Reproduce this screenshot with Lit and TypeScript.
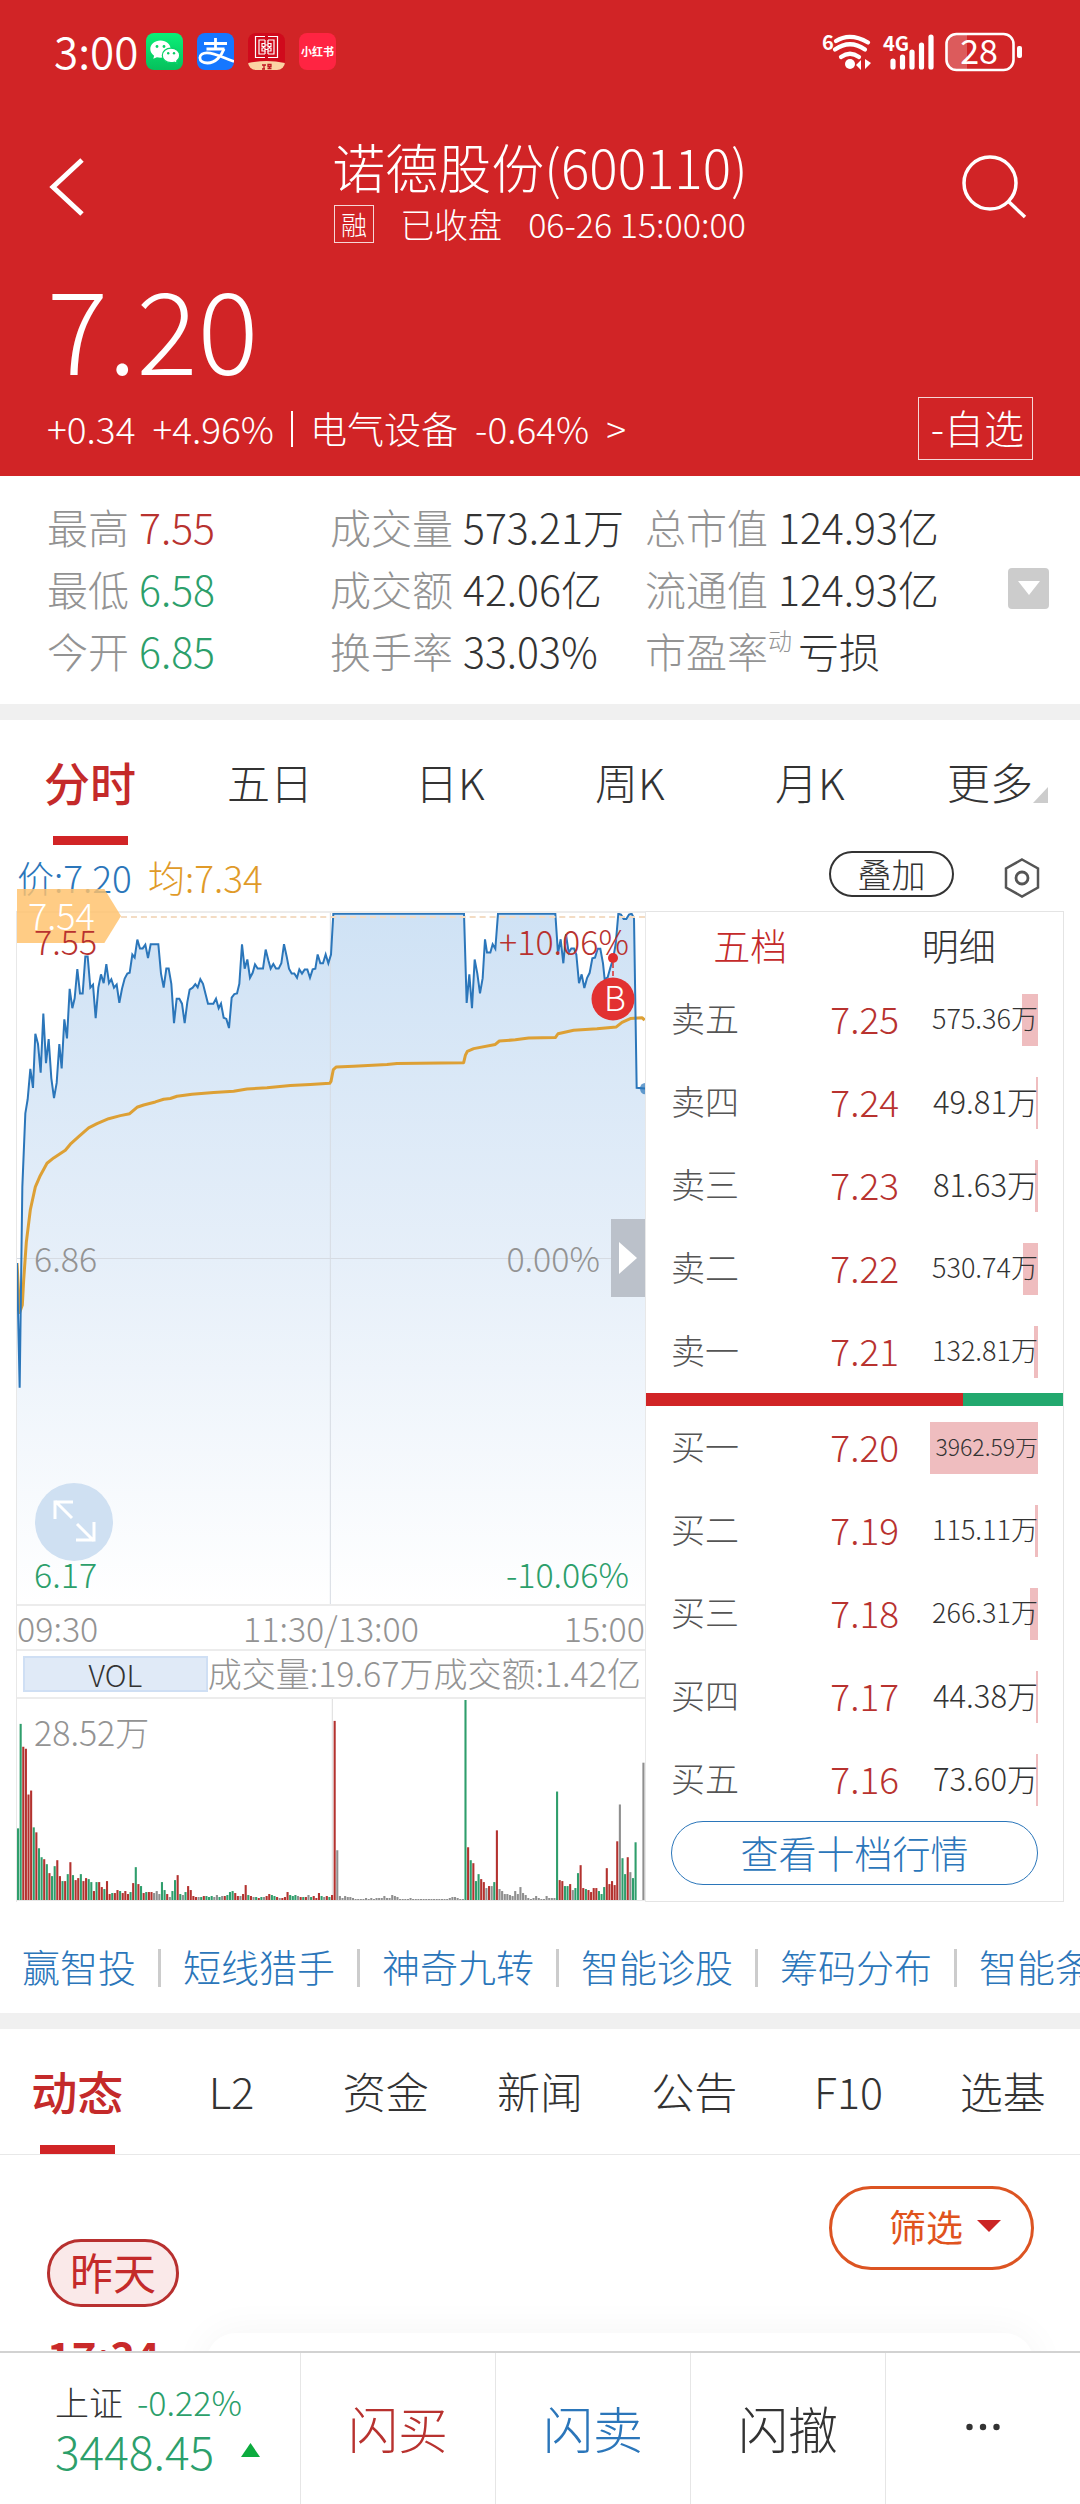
import { LitElement, html, css, svg } from "lit";
import { customElement, property } from "lit/decorators.js";
import { classMap } from "lit/directives/class-map.js";
import { styleMap } from "lit/directives/style-map.js";

const FONT = css`"Noto Sans CJK SC", "Noto Sans", sans-serif`;

const RESET = css`
  * {
    box-sizing: border-box;
  }
  button {
    margin: 0;
    padding: 0;
    border: 0;
    background: none;
    font: inherit;
    color: inherit;
    cursor: pointer;
  }
  a {
    color: inherit;
    text-decoration: none;
  }
  svg {
    display: block;
  }
`;

/* ---------- data ---------- */

interface Stat {
  label: string;
  value: string;
  tone?: "up" | "down";
  mark?: string;
}

const STATS: Stat[][] = [
  [
    { label: "最高", value: "7.55", tone: "up" },
    { label: "成交量", value: "573.21万" },
    { label: "总市值", value: "124.93亿" },
  ],
  [
    { label: "最低", value: "6.58", tone: "down" },
    { label: "成交额", value: "42.06亿" },
    { label: "流通值", value: "124.93亿" },
  ],
  [
    { label: "今开", value: "6.85", tone: "down" },
    { label: "换手率", value: "33.03%" },
    { label: "市盈率", value: "亏损", mark: "动" },
  ],
];

interface Level {
  name: string;
  price: string;
  amount: string;
  share: number;
}

const ASKS: Level[] = [
  { name: "卖五", price: "7.25", amount: "575.36万", share: 15 },
  { name: "卖四", price: "7.24", amount: "49.81万", share: 2 },
  { name: "卖三", price: "7.23", amount: "81.63万", share: 3 },
  { name: "卖二", price: "7.22", amount: "530.74万", share: 14 },
  { name: "卖一", price: "7.21", amount: "132.81万", share: 4 },
];

const BIDS: Level[] = [
  { name: "买一", price: "7.20", amount: "3962.59万", share: 100 },
  { name: "买二", price: "7.19", amount: "115.11万", share: 3 },
  { name: "买三", price: "7.18", amount: "266.31万", share: 7 },
  { name: "买四", price: "7.17", amount: "44.38万", share: 2 },
  { name: "买五", price: "7.16", amount: "73.60万", share: 2 },
];

const PRICE_LINE =
  "50,1105 58,1432 66,905 75,712 82,675 90,595 98,645 105,503 113,530 121,605 129,450 137,580 145,517 153,620 161,672 169,632 177,530 184,594 192,465 200,515 208,385 216,436 223,410 231,333 239,397 247,397 255,300 262,300 270,382 278,374 286,462 294,382 302,347 310,370 318,320 326,370 333,360 341,382 349,374 357,422 365,385 373,358 381,345 388,343 396,295 403,303 411,256 419,279 427,279 435,269 443,304 451,268 474,268 482,345 490,382 498,332 505,332 513,372 521,475 529,411 537,411 545,424 553,475 561,420 568,387 577,382 585,373 592,381 600,360 608,372 616,400 623,424 639,424 647,411 655,436 662,424 670,461 678,464 686,488 694,408 702,399 710,397 717,372 725,268 733,332 741,308 749,356 757,343 764,321 772,332 788,332 796,282 804,310 811,332 819,320 827,332 835,332 843,318 851,268 859,300 866,332 874,345 882,345 890,356 897,334 905,345 913,334 921,334 929,356 937,334 945,332 952,295 960,318 968,318 976,295 984,318 992,295 999,188 1391,188 1399,422 1407,347 1415,436 1423,308 1431,345 1439,397 1447,357 1454,255 1460,290 1470,290 1477,268 1485,280 1493,188 1665,188 1673,292 1681,255 1689,318 1697,242 1705,290 1713,279 1721,279 1728,295 1736,370 1744,347 1752,383 1760,357 1768,343 1776,305 1784,303 1792,280 1800,280 1808,318 1813,360 1822,355 1830,330 1838,307 1846,268 1854,188 1862,190 1870,202 1878,202 1886,190 1894,188 1901,200 1909,645 1934,647";

const AVERAGE_LINE =
  "50,1105 58,1235 66,1215 70,1150 78,1050 90,965 105,905 120,875 140,843 160,829 195,809 210,793 235,773 265,750 290,739 325,726 360,718 388,713 410,696 430,690 465,682 490,675 510,673 530,667 575,662 640,657 700,654 740,648 800,645 870,639 930,636 988,633 992,628 999,597 1008,590 1060,588 1160,584 1190,581 1390,579 1395,560 1401,549 1420,542 1485,531 1497,522 1545,519 1585,514 1665,513 1673,503 1720,494 1790,490 1848,485 1865,473 1890,463 1925,461 1933,467";

/* One entry a minute: r = up, g = down, n = flat, then the bar height. */
const VOLUME =
  "g72 g177 r154 r152 r106 r110 g73 r68 g52 g43 r41 g36 r27 g24 g34 r40 r24 g19 r19 g26 r38 g25 r20 r22 g26 r19 r22 g21 g18 r9 g18 r18 r13 g11 r19 r6 g7 r7 r10 g9 r7 r9 r6 g8 r17 g33 r16 g14 r7 g8 r8 r8 n7 n9 n6 g18 g10 r6 n3 g9 g20 r25 g6 n5 g8 r14 r10 r4 r3 n3 g3 r4 g4 g3 g4 n3 n5 g3 n4 r4 g5 g8 g9 r7 r4 n4 r6 r15 g5 r4 n3 g3 r2 g3 n3 r4 r6 g5 g4 r3 n2 r2 r3 r8 g5 g4 g5 n4 r3 g3 r3 n5 g3 r4 r2 r7 g4 n3 r4 g3 r5 r180 n50 n4 n2 n4 n3 n3 n2 n1 n1 n1 n1 n2 n1 n2 n1 n2 n2 n2 n4 n2 n2 n5 n4 n3 n1 n1 n1 n1 n2 n1 n1 n1 n1 n1 n1 n1 n1 n1 n1 n1 n1 n1 n1 n2 n3 n3 n2 n1 n1 g201 r53 g40 r37 g19 g26 r21 r18 n12 r14 n14 g18 r70 n11 n9 n6 n6 n5 n4 n9 n6 n13 n7 n5 n2 n1 n2 n4 n2 n1 n1 n4 n2 n2 n2 g109 r20 r19 g14 g14 r16 n10 g12 g27 r35 r12 g11 r10 r8 r12 r12 g9 g6 g13 r32 r16 r19 r15 r59 n96 g42 g26 r43 n28 g22 g58 n0 n0 n138";

const TONES: Record<string, string> = { r: "#b3322f", g: "#2f9e6c", n: "#8f8f8f" };

/* ---------- status bar ---------- */

@customElement("status-bar")
class StatusBar extends LitElement {
  static styles = [
    RESET,
    css`
      :host {
        display: flex;
        align-items: center;
        height: 103px;
        padding: 0 57px 0 54px;
        color: #fff;
      }
      .clock {
        margin-right: 8px;
        padding-bottom: 4px;
        font-size: 44px;
        font-weight: 350;
        line-height: 60px;
      }
      .apps {
        display: flex;
        gap: 14px;
      }
      .signals {
        display: flex;
        align-items: center;
        gap: 9px;
        margin-left: auto;
      }
      .tiny {
        font: 700 11px ${FONT};
      }
      .net {
        font: 700 20px ${FONT};
      }
      .level {
        font: 400 34px ${FONT};
      }
    `,
  ];

  render() {
    return html`
      <span class="clock">3:00</span>
      <span class="apps">
        <svg width="37" height="37" viewBox="0 0 37 37">
          <defs>
            <linearGradient id="wx" x1="0" y1="0" x2="0" y2="1">
              <stop offset="0" stop-color="#0af078" />
              <stop offset="1" stop-color="#06c05c" />
            </linearGradient>
          </defs>
          <rect width="37" height="37" rx="8" fill="url(#wx)" />
          <path d="M14.500 7.500c5.800 0 10.200 3.800 10.200 8.600s-4.400 8.600-10.200 8.600c-1.300 0-2.500-.2-3.600-.5l-3.600 1.600.8-3c-2.400-1.600-3.800-3.900-3.800-6.700 0-4.800 4.400-8.600 10.200-8.600z" fill="#fff" />
          <path d="M25 15.200c5 0 8.700 3.200 8.700 7.200 0 2.300-1.200 4.200-3 5.500l.6 2.500-3-1.200c-1 .3-2.100.5-3.300.5-5 0-8.700-3.300-8.700-7.300s3.700-7.200 8.700-7.200z" fill="#fff" stroke="#08d268" stroke-width="1.200" />
          <circle cx="11" cy="13.500" r="1.400" fill="#08d268" />
          <circle cx="18" cy="13.500" r="1.400" fill="#08d268" />
          <circle cx="22.200" cy="20.300" r="1.200" fill="#08cc64" />
          <circle cx="28" cy="20.300" r="1.200" fill="#08cc64" />
        </svg>
        <svg width="37" height="37" viewBox="0 0 37 37">
          <rect width="37" height="37" rx="8" fill="#1677ff" />
          <g fill="none" stroke="#fff" stroke-linejoin="round">
            <path d="M7 10.500h23M18.500 5v11M9.500 16h18" stroke-width="2.800" />
            <path d="M27 16c-2.600 7-8.500 14-16.500 14-4.500 0-7.600-2-7.600-5.200 0-3 3-5 7-5 8 0 17 5.200 27.100 8.700" stroke-width="2.800" />
          </g>
        </svg>
        <svg width="37" height="37" viewBox="0 0 37 37">
          <clipPath id="round"><rect width="37" height="37" rx="8" /></clipPath>
          <g clip-path="url(#round)">
            <rect width="37" height="37" fill="#d00a1c" />
            <g fill="none" stroke="#fff" stroke-width="1.200">
              <path d="M17 3.500H7.500v21H17M20 3.500h9.500v21H20" />
              <path d="M17 7h-6v14h6M20 7h6v14h-6M17 7v3M20 7v3M17 21v-3M20 21v-3" />
              <path d="M14 10.500h3v3h-3zM20 10.500h3v3h-3zM14 15h3v3h-3zM20 15h3v3h-3zM17 12h3M17 16.500h3M15.500 13.500v2M21.500 13.500v2" />
            </g>
            <path d="M0 30q18.500-4 37 0v7H0z" fill="#fbd3a4" />
            <path d="M14 32h4M16 32v4M14 36h3M20 31.500h3v2h-3zM19.500 35.500h4M21.500 33v3" stroke="#c01622" stroke-width="1.300" fill="none" />
          </g>
        </svg>
        <svg width="37" height="37" viewBox="0 0 37 37">
          <rect width="37" height="37" rx="8" fill="#ff2442" />
          <text class="tiny" x="18.500" y="23" text-anchor="middle" fill="#fff">小红书</text>
        </svg>
      </span>
      <span class="signals">
        <svg width="52" height="40" viewBox="0 0 52 40">
          <text class="net" x="1" y="18" fill="#fff">6</text>
          <g fill="none" stroke="#fff" stroke-width="4.200" stroke-linecap="round">
            <path d="M15 9q14-9 32 1.500" />
            <path d="M14 17.500q15-10.500 30 0" />
            <path d="M20 25q9-6.500 18 0" />
          </g>
          <circle cx="29" cy="32" r="5" fill="#fff" />
          <path d="M35 33l5-5v10zM50 31l-6-4v10z" fill="#fff" />
        </svg>
        <svg width="54" height="40" viewBox="0 0 54 40">
          <text class="net" x="1" y="19" fill="#fff">4G</text>
          <path d="M11 29v6M20.500 25v10M30 20v15M39.500 13v22M49 5v30" stroke="#fff" stroke-width="5.200" stroke-linecap="round" />
        </svg>
        <svg width="78" height="40" viewBox="0 0 78 40">
          <path d="M11 3h11v34H11q-9 0-9-9V12q0-9 9-9z" fill="#fff" fill-opacity=".25" />
          <rect x="1.500" y="2" width="67" height="36" rx="10" fill="none" stroke="#fff" stroke-width="2.600" />
          <rect x="72" y="14" width="5" height="12" rx="2" fill="#fff" />
          <text class="level" x="34" y="32" text-anchor="middle" fill="#fff">28</text>
        </svg>
      </span>
    `;
  }
}

/* ---------- red quote header ---------- */

@customElement("quote-header")
class QuoteHeader extends LitElement {
  static styles = [
    RESET,
    css`
      :host {
        display: block;
        padding-bottom: 16px;
        background: #d12426;
        color: #fff;
      }
      .nav {
        display: grid;
        grid-template-columns: 120px 1fr 120px;
        align-items: center;
        margin-top: 25px;
        padding: 0 48px;
      }
      .search {
        justify-self: end;
      }
      .title {
        padding: 8px 0 2px;
        text-align: center;
      }
      h1 {
        margin: 0 0 8px;
        font-size: 53px;
        font-weight: inherit;
        line-height: 60px;
      }
      .session {
        display: flex;
        justify-content: center;
        align-items: center;
        gap: 26px;
        font-size: 34px;
        line-height: 40px;
      }
      .margin {
        padding: 0 6px;
        border: 1px solid #f6d6d6;
        font-size: 26px;
        line-height: 36px;
      }
      .price {
        margin-top: 30px;
        padding-left: 47px;
        font-size: 114px;
        line-height: 100px;
      }
      .change {
        display: flex;
        align-items: center;
        gap: 17px;
        margin-top: 21px;
        padding: 0 47px;
        font-size: 37px;
        line-height: 60px;
        white-space: nowrap;
      }
      .change > span,
      .sector {
        padding-bottom: 2px;
      }
      .bar {
        width: 2px;
        height: 36px;
        background: #fff;
      }
      .sector {
        display: flex;
        gap: 17px;
      }
      .watch {
        margin-left: auto;
        padding: 0 8px 2px 12px;
        border: 1px solid #f6d6d6;
        font-size: 40px;
        line-height: 59px;
      }
    `,
  ];

  render() {
    return html`
      <status-bar></status-bar>
      <div class="nav">
        <button class="back" aria-label="返回">
          <svg width="38" height="60" viewBox="0 0 38 60">
            <path d="M34 3L5 30l29 27" fill="none" stroke="#fff" stroke-width="5" />
          </svg>
        </button>
        <div class="title">
          <h1>诺德股份(600110)</h1>
          <div class="session"><span class="margin">融</span><span>已收盘</span><span>06-26 15:00:00</span></div>
        </div>
        <button class="search" aria-label="搜索">
          <svg width="70" height="66" viewBox="0 0 70 66">
            <circle cx="28" cy="29" r="26" fill="none" stroke="#fff" stroke-width="3.500" />
            <path d="M46 47l17 16" stroke="#fff" stroke-width="3.500" />
          </svg>
        </button>
      </div>
      <div class="price">7.20</div>
      <div class="change">
        <span>+0.34</span><span>+4.96%</span>
        <span class="bar"></span>
        <a class="sector" href="#sector"><span>电气设备</span><span>-0.64%</span><span>&gt;</span></a>
        <button class="watch">-自选</button>
      </div>
    `;
  }
}

/* ---------- key figures ---------- */

@customElement("quote-stats")
class QuoteStats extends LitElement {
  static styles = [
    RESET,
    css`
      :host {
        display: flex;
        align-items: flex-start;
        padding: 19px 31px 23px 47px;
        border-bottom: 16px solid #f0f0f0;
        font-size: 41px;
        line-height: 62px;
        color: #333;
      }
      table {
        flex: 1;
        border-collapse: collapse;
        table-layout: fixed;
      }
      .c1 {
        width: 283px;
      }
      .c2 {
        width: 315px;
      }
      td {
        padding: 0;
        white-space: nowrap;
      }
      .label {
        margin-right: 10px;
        color: #939393;
      }
      .marked {
        margin-right: 6px;
      }
      .up {
        color: #b8322f;
      }
      .down {
        color: #2c9f6b;
      }
      sup {
        font-size: 24px;
        line-height: 0;
        vertical-align: 18px;
      }
      .more {
        display: grid;
        place-items: center;
        align-self: center;
        width: 41px;
        height: 41px;
        border-radius: 4px;
        background: #ccc;
      }
    `,
  ];

  render() {
    return html`
      <table>
        <colgroup><col class="c1" /><col class="c2" /><col /></colgroup>
        <tbody>
          ${STATS.map(
            (row) => html`<tr>
              ${row.map(
                (s) => html`<td>
                  <span class=${classMap({ label: true, marked: !!s.mark })}>${s.label}${s.mark ? html`<sup>${s.mark}</sup>` : ""}</span
                  ><span class=${s.tone ?? ""}>${s.value}</span>
                </td>`
              )}
            </tr>`
          )}
        </tbody>
      </table>
      <button class="more" aria-label="展开">
        <svg width="22" height="14" viewBox="0 0 22 14"><path d="M0 0h22L11 14z" fill="#fff" /></svg>
      </button>
    `;
  }
}

/* ---------- tab strip ---------- */

@customElement("tab-strip")
class TabStrip extends LitElement {
  @property({ type: Array }) items: string[] = [];
  @property({ type: Boolean }) expandable = false;

  static styles = [
    RESET,
    css`
      :host {
        display: flex;
        font-size: 43px;
        line-height: 60px;
        color: #333;
      }
      .tab {
        display: flex;
        flex: 1 1 0;
        flex-direction: column;
        align-items: center;
        gap: 25px;
        padding-top: 31px;
        white-space: nowrap;
      }
      .mark {
        width: 75px;
        height: 9px;
      }
      .on {
        font-size: 46px;
        font-weight: 500;
        color: #c42a2a;
      }
      .on .mark {
        background: #d12426;
      }
      .text {
        position: relative;
      }
      .corner {
        position: absolute;
        right: -15px;
        bottom: 8px;
      }
    `,
  ];

  render() {
    return this.items.map((name, i) => {
      const last = this.expandable && i === this.items.length - 1;
      return html`<button class=${classMap({ tab: true, on: i === 0 })}>
        <span class="text"
          >${name}${last
            ? html`<svg class="corner" width="15" height="16" viewBox="0 0 15 16"><path d="M15 0v16H0z" fill="#ccc" /></svg>`
            : ""}</span
        >
        <span class="mark"></span>
      </button>`;
    });
  }
}

/* ---------- intraday chart ---------- */

@customElement("intraday-chart")
class IntradayChart extends LitElement {
  static styles = [
    RESET,
    css`
      :host {
        display: block;
        border: solid #e8e8e8;
        border-width: 0 1px 0 1px;
        font-size: 34px;
        line-height: 40px;
        color: #939393;
      }
      .price {
        position: relative;
        height: 695px;
        border: solid #ececec;
        border-width: 2px 0;
      }
      .plot {
        width: 100%;
        height: 100%;
      }
      .note {
        position: absolute;
      }
      .left {
        left: 17px;
      }
      .right {
        right: 16px;
      }
      .top {
        top: 8px;
        color: #b8322f;
      }
      .middle {
        top: 325px;
      }
      .inset {
        right: 45px;
      }
      .bottom {
        bottom: 10px;
        color: #2c9f6b;
      }
      .tag {
        position: absolute;
        top: -24px;
        left: 0;
        width: 104px;
        height: 54px;
        padding-left: 11px;
        background: #ffc26cd4;
        clip-path: polygon(0 0, 84% 0, 100% 50%, 84% 100%, 0 100%);
        font-size: 36px;
        line-height: 50px;
        color: #fff;
      }
      .rule {
        position: absolute;
        top: 3px;
        left: 104px;
        right: 0;
        border-top: 2px dashed #f3dcc4;
      }
      .trade {
        position: absolute;
        top: 39px;
        right: 10px;
      }
      .letter {
        font: 300 34px ${FONT};
      }
      .side {
        position: absolute;
        top: 306px;
        right: 0;
        display: grid;
        place-items: center;
        width: 34px;
        height: 78px;
        background: #bbc1ca;
      }
      .zoom {
        position: absolute;
        left: 18px;
        bottom: 43px;
      }
      .hours {
        display: flex;
        justify-content: space-between;
        line-height: 43px;
      }
      .study {
        display: flex;
        align-items: center;
        height: 50px;
        padding: 0 4px 0 6px;
        border: solid #ececec;
        border-width: 2px 0;
        white-space: nowrap;
      }
      .figures {
        padding-bottom: 2px;
      }
      .kind {
        flex: 1;
        border: 2px solid #cfdff4;
        background: #e0eaf7;
        font-size: 30px;
        line-height: 32px;
        color: #333;
      }
      .volume {
        position: relative;
        height: 202px;
        border-bottom: 1px solid #e8e8e8;
      }
      .peak {
        top: 13px;
      }
    `,
  ];

  render() {
    const bars = VOLUME.split(" ");
    return html`
      <div class="price">
        <svg class="plot" viewBox="50 186 1884 1814" preserveAspectRatio="none">
          <defs>
            <linearGradient id="fill" x1="0" y1="0" x2="0" y2="1">
              <stop offset="0" stop-color="#cfe2f5" />
              <stop offset=".5" stop-color="#e6eff9" />
              <stop offset="1" stop-color="#ffffff" />
            </linearGradient>
          </defs>
          <polygon points="50,2000 ${PRICE_LINE} 1934,2000" fill="url(#fill)" />
          <path d="M50 1093H1934M990 186V2000" stroke="#d6dbe2" stroke-width="1" vector-effect="non-scaling-stroke" fill="none" />
          <polyline points=${AVERAGE_LINE} fill="none" stroke="#dda035" stroke-width="3" stroke-linejoin="round" vector-effect="non-scaling-stroke" />
          <polyline points=${PRICE_LINE} fill="none" stroke="#2b76ba" stroke-width="2" vector-effect="non-scaling-stroke" />
          <circle cx="1934" cy="647" r="15" fill="#2b76ba" fill-opacity=".7" />
        </svg>
        <div class="rule"></div>
        <div class="tag">7.54</div>
        <span class="note left top">7.55</span>
        <span class="note right top">+10.06%</span>
        <svg class="trade" width="44" height="70" viewBox="0 0 44 70">
          <circle cx="22" cy="6" r="5" fill="#e02d2d" />
          <path d="M22 11v15" stroke="#e02d2d" stroke-width="1.500" stroke-dasharray="5 3" />
          <circle cx="22" cy="47" r="21.500" fill="#e23131" />
          <text class="letter" x="24" y="59" text-anchor="middle" fill="#fff">B</text>
        </svg>
        <span class="note left middle">6.86</span>
        <span class="note inset middle">0.00%</span>
        <button class="side" aria-label="收起盘口">
          <svg width="18" height="32" viewBox="0 0 18 32"><path d="M0 0l18 16L0 32z" fill="#fff" /></svg>
        </button>
        <button class="zoom" aria-label="全屏">
          <svg width="78" height="78" viewBox="0 0 78 78">
            <circle cx="39" cy="39" r="39" fill="#cfe0f2" />
            <path d="M37 35L20 18M20 36V19h18M42 41l17 17M59 39v18H41" fill="none" stroke="#fff" stroke-width="3" />
          </svg>
        </button>
        <span class="note left bottom">6.17</span>
        <span class="note right bottom">-10.06%</span>
      </div>
      <div class="hours"><span>09:30</span><span>11:30/13:00</span><span>15:00</span></div>
      <div class="study">
        <button class="kind">VOL</button>
        <span class="figures">成交量:19.67万成交额:1.42亿</span>
      </div>
      <div class="volume">
        <svg class="plot" viewBox="0 0 ${bars.length} 202" preserveAspectRatio="none">
          <path d="M120.500 0V202" stroke="#dcdcdc" stroke-width="1" vector-effect="non-scaling-stroke" />
          ${bars.map((b, i) => {
            const h = Number(b.slice(1));
            return svg`<rect x=${i} y=${202 - h} width=".8" height=${h} fill=${TONES[b[0]]} />`;
          })}
        </svg>
        <span class="note left peak">28.52万</span>
      </div>
    `;
  }
}

/* ---------- order book ---------- */

@customElement("order-book")
class OrderBook extends LitElement {
  static styles = [
    RESET,
    css`
      :host {
        display: block;
        padding-bottom: 16px;
        border: solid #e4e4e4;
        border-width: 1px 1px 1px 0;
      }
      .tabs {
        display: grid;
        grid-template-columns: 1fr 1fr;
        font-size: 37px;
        line-height: 66px;
        color: #333;
      }
      .on {
        color: #c42a2a;
      }
      .levels {
        padding: 0 25px;
      }
      table {
        width: 100%;
        border-collapse: collapse;
        table-layout: fixed;
      }
      .amount {
        width: 108px;
      }
      td {
        height: 83px;
        padding: 0;
      }
      .name,
      .cost {
        padding-bottom: 4px;
      }
      .name {
        font-size: 34px;
        color: #555;
      }
      .cost {
        padding-right: 31px;
        font-size: 37px;
        text-align: right;
        color: #b8322f;
      }
      .cell {
        display: grid;
        height: 52px;
        line-height: 48px;
        text-align: right;
        color: #333;
      }
      .cell > * {
        grid-area: 1 / 1;
      }
      .fill {
        justify-self: end;
        background: #efbdbf;
      }
      .large {
        font-size: 31px;
      }
      .medium {
        font-size: 27px;
      }
      .small {
        font-size: 23px;
      }
      .ratio {
        display: flex;
        height: 13px;
        background: #22a86e;
      }
      .sell {
        background: #d12426;
      }
      .depth {
        display: block;
        width: 100%;
        padding-bottom: 2px;
        border: 1px solid #2b76ba;
        border-radius: 32px;
        font-size: 38px;
        line-height: 60px;
        color: #2b76ba;
      }
    `,
  ];

  private rows(levels: Level[]) {
    return html`<div class="levels">
      <table>
        <colgroup><col /><col /><col class="amount" /></colgroup>
        <tbody>
          ${levels.map((l) => {
            const n = l.amount.length;
            return html`<tr>
              <td class="name">${l.name}</td>
              <td class="cost">${l.price}</td>
              <td>
                <div class="cell">
                  <span class="fill" style=${styleMap({ width: `${l.share}%` })}></span>
                  <span class=${classMap({ large: n < 7, medium: n === 7, small: n > 7 })}>${l.amount}</span>
                </div>
              </td>
            </tr>`;
          })}
        </tbody>
      </table>
    </div>`;
  }

  render() {
    return html`
      <div class="tabs"><button class="on">五档</button><button>明细</button></div>
      ${this.rows(ASKS)}
      <div class="ratio"><span class="sell" style=${styleMap({ width: "76%" })}></span></div>
      ${this.rows(BIDS)}
      <div class="levels"><button class="depth">查看十档行情</button></div>
    `;
  }
}

/* ---------- page ---------- */

@customElement("app-root")
class AppRoot extends LitElement {
  static styles = [
    RESET,
    css`
      :host {
        display: flex;
        flex-direction: column;
        min-height: 100vh;
        overflow: hidden;
        background: #fff;
        font-family: ${FONT};
        font-weight: 300;
        color: #333;
      }
      .legend {
        display: flex;
        align-items: center;
        gap: 16px;
        height: 66px;
        padding: 0 40px 0 17px;
        font-size: 37px;
        line-height: 60px;
      }
      .now,
      .mean {
        padding-bottom: 2px;
      }
      .now {
        color: #2b76ba;
      }
      .mean {
        color: #e09a28;
      }
      .overlay {
        width: 125px;
        margin: 0 34px 8px auto;
        border: 2px solid #333;
        border-radius: 23px;
        font-size: 34px;
        line-height: 42px;
      }
      .market {
        display: grid;
        grid-template-columns: 630fr 418fr;
        padding: 0 16px;
      }
      .tools {
        display: flex;
        align-items: center;
        gap: 22px;
        height: 127px;
        padding: 20px 22px 0;
        overflow: hidden;
        border-bottom: 16px solid #f0f0f0;
        font-size: 38px;
        line-height: 60px;
        white-space: nowrap;
        color: #2b76ba;
      }
      .tools a {
        flex: none;
        padding-bottom: 4px;
      }
      .sep {
        flex: none;
        width: 3px;
        height: 38px;
        background: #ccc;
      }
      .feed {
        display: grid;
        flex: 1 1 0;
        grid-template-columns: 159px 1fr;
        grid-template-rows: 178px auto;
        min-height: 197px;
        overflow: hidden;
        border-top: 1px solid #e8e8e8;
        padding: 0 46px 0 47px;
      }
      .head {
        display: flex;
        grid-column: 1 / -1;
        justify-content: space-between;
        align-items: flex-start;
        padding-top: 31px;
      }
      .day {
        margin-top: 53px;
        padding: 0 20px 4px;
        border: 3px solid #b8302f;
        border-radius: 34px;
        background: #fae9e9;
        font-size: 43px;
        font-weight: 400;
        line-height: 58px;
        color: #c42a2a;
      }
      .filter {
        display: flex;
        align-items: center;
        gap: 14px;
        padding: 0 30px 4px 57px;
        border: 3px solid #dc5422;
        border-radius: 42px;
        font-size: 37px;
        font-weight: 400;
        line-height: 74px;
        color: #e0531d;
      }
      .time {
        font-size: 42px;
        font-weight: 700;
        line-height: 44px;
        color: #c92a2a;
      }
      .card {
        height: 200px;
        border-radius: 30px;
        background: #fff;
        box-shadow: 0 0 40px #0000000c;
      }
      .dock {
        position: relative;
        display: grid;
        grid-template-columns: 300fr 195fr 195fr 195fr 195fr;
        height: 153px;
        border-top: 2px solid #d2d2d2;
        background: #fff;
        font-size: 50px;
      }
      .dock > * {
        padding-bottom: 4px;
      }
      .dock > * + * {
        border-left: 1px solid #e6e6e6;
      }
      .index {
        display: flex;
        flex-direction: column;
        justify-content: center;
        padding-left: 55px;
      }
      .pair {
        display: flex;
        gap: 14px;
        font-size: 34px;
        line-height: 46px;
      }
      .points {
        display: flex;
        align-items: center;
        gap: 27px;
        font-size: 46px;
        line-height: 50px;
      }
      .down {
        color: #2c9f6b;
      }
      .buy {
        color: #b8322f;
      }
      .sell {
        color: #2b76ba;
      }
      .dots {
        display: grid;
        place-items: center;
      }
    `,
  ];

  render() {
    const tools = ["赢智投", "短线猎手", "神奇九转", "智能诊股", "筹码分布", "智能条件单"];
    return html`
      <quote-header></quote-header>
      <quote-stats></quote-stats>
      <tab-strip .items=${["分时", "五日", "日K", "周K", "月K", "更多"]} expandable></tab-strip>
      <div class="legend">
        <span class="now">价:7.20</span><span class="mean">均:7.34</span>
        <button class="overlay">叠加</button>
        <button aria-label="设置">
          <svg width="36" height="40" viewBox="0 0 36 40">
            <path d="M18 1.500L34 10.500v19L18 38.500 2 29.500v-19z" fill="none" stroke="#555" stroke-width="2.500" />
            <circle cx="18" cy="20" r="6" fill="none" stroke="#555" stroke-width="2.800" />
          </svg>
        </button>
      </div>
      <div class="market">
        <intraday-chart></intraday-chart>
        <order-book></order-book>
      </div>
      <nav class="tools">
        ${tools.map((t, i) => html`${i ? html`<span class="sep"></span>` : ""}<a href="#tool-${i}">${t}</a>`)}
      </nav>
      <tab-strip .items=${["动态", "L2", "资金", "新闻", "公告", "F10", "选基"]}></tab-strip>
      <section class="feed">
        <div class="head">
          <span class="day">昨天</span>
          <button class="filter">
            筛选<svg width="24" height="12" viewBox="0 0 24 12"><path d="M0 0h24L12 12z" fill="#cb2424" /></svg>
          </button>
        </div>
        <span class="time">17:34</span>
        <article class="card"></article>
      </section>
      <footer class="dock">
        <a class="index" href="#index">
          <span class="pair"><span>上证</span><span class="down">-0.22%</span></span>
          <span class="points down"
            >3448.45<svg width="19" height="14" viewBox="0 0 19 14"><path d="M9.500 0L19 14H0z" fill="#0cab3e" /></svg
          ></span>
        </a>
        <button class="buy">闪买</button>
        <button class="sell">闪卖</button>
        <button>闪撤</button>
        <button class="dots" aria-label="更多">
          <svg width="34" height="8" viewBox="0 0 34 8">
            <g fill="#333"><circle cx="3.500" cy="4" r="3.200" /><circle cx="17" cy="4" r="3.200" /><circle cx="30.500" cy="4" r="3.200" /></g>
          </svg>
        </button>
      </footer>
    `;
  }
}
